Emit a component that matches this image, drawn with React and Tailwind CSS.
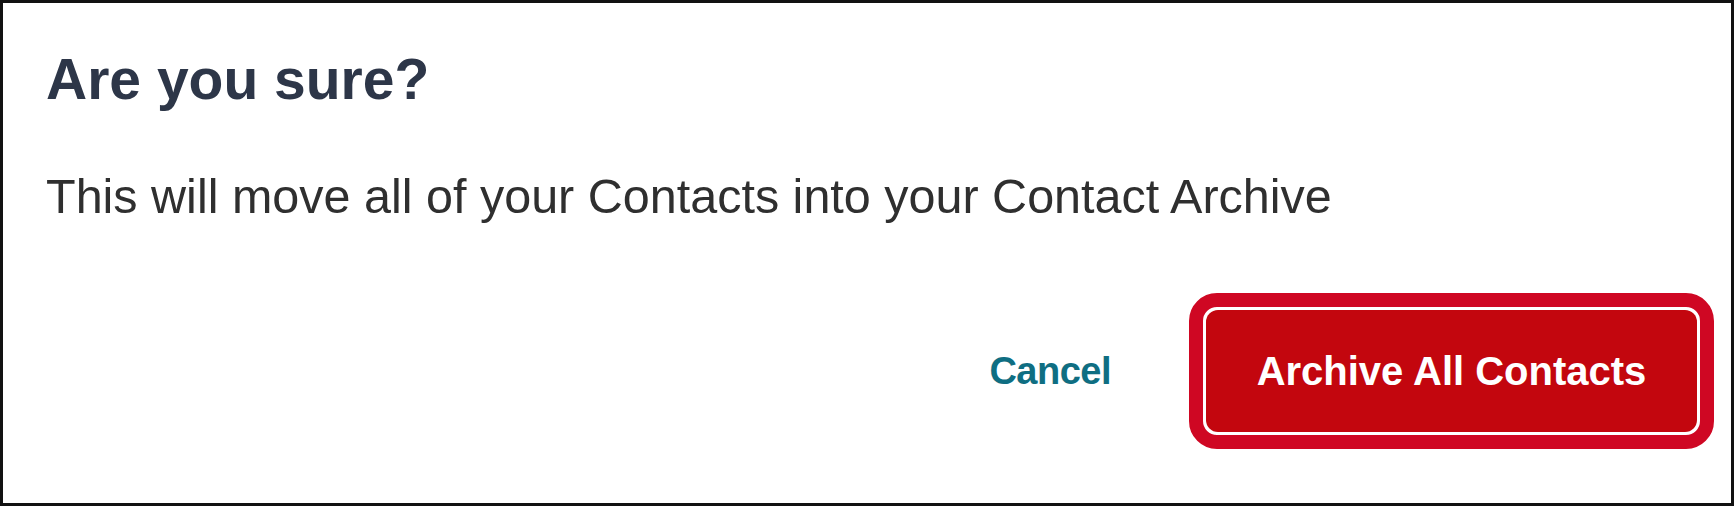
import React from "react";

const sans = { fontFamily: '"Liberation Sans", Arial, sans-serif' };

export default function App() {
  return (
    <div className="h-[508px] w-[1734px] bg-white" style={sans}>
      <div className="flex h-[506px] flex-col border-[3px] border-[#111] pl-[43px] pr-[17px] pt-[48px]">
        <h1 className="text-[57px] font-bold leading-none text-[#2d3648]">
          Are you sure?
        </h1>
        <p className="mt-[64px] text-[48.5px] leading-none text-[#2f2f2f]">
          This will move all of your Contacts into your Contact Archive
        </p>

        <div className="mt-[72px] flex items-center justify-end">
          <button
            type="button"
            className="mr-[78px] text-[38px] font-bold leading-none tracking-[-0.5px] text-[#0f6e82]"
          >
            Cancel
          </button>
          {/* highlighted primary action */}
          <div className="rounded-[28px] border-[14px] border-[#cf0723] bg-white p-[3px]">
            <button
              type="button"
              className="flex h-[122px] w-[491px] items-center justify-center rounded-[12px] bg-[#c3060e] text-[40px] font-bold leading-none text-white"
            >
              Archive All Contacts
            </button>
          </div>
        </div>
      </div>
    </div>
  );
}
